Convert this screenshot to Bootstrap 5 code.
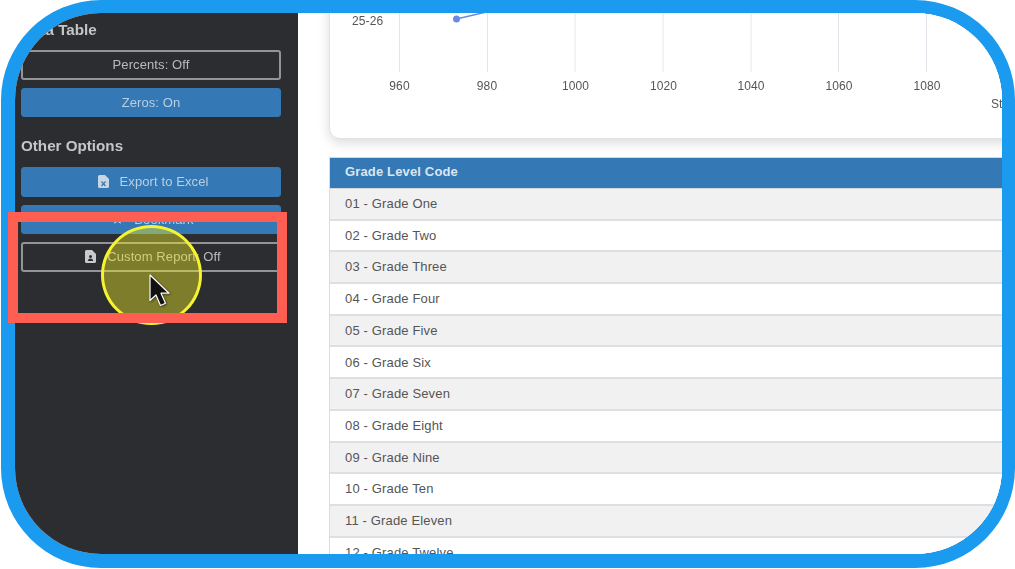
<!DOCTYPE html>
<html lang="en">
<head>
<meta charset="utf-8">
<title>Data table options</title>
<link href="https://cdn.jsdelivr.net/npm/bootstrap@5.3.0/dist/css/bootstrap.min.css" rel="stylesheet">
<style>
html,body{margin:0;height:569px;overflow:hidden;background:#fff;font-family:"Liberation Sans",Arial,sans-serif}
.page-canvas{position:relative;width:1015px;height:569px;overflow:hidden}
.frame-shell{box-sizing:border-box;width:1014px;height:568px;margin-left:1px;border:solid #1a9bf0;border-width:13px 13px 14px 14px;border-radius:100px;overflow:hidden;background:#fff}
.sidebar-pane{flex:0 0 283px;width:283px;height:541px;background:#2c2d30;padding:7px 17px 0 6px;color:#c9cbcd}
.soft-blur{filter:blur(.6px)}
.side-title{font-size:15.2px;font-weight:700;line-height:20px;margin:0 0 10px;color:#c4c6c8}
.side-title.later{margin:19px 0 11px}
.side-btn{display:flex;align-items:center;justify-content:center;gap:11px;height:29.5px;width:260px;padding:0;font-size:13px;line-height:1;border-radius:3px;color:#c8ccd2;letter-spacing:.1px}
.side-btn.with-icon{padding-left:4px}
.side-btn.is-on{background:#3478b5;border:1px solid #3478b5;color:#b9cfe4}
.side-btn.is-off{background:transparent;border:2px solid #929497;color:#b9bbbd}
.side-btn svg{flex:none}
.stack-a{display:flex;flex-direction:column;gap:8px}
.main-pane{flex:1 1 auto;min-width:0;height:541px;overflow:hidden;padding-left:31px;background:#fff}
.main-inner{width:800px;margin-top:-20px}
.chart-card{height:146px;border:1px solid #dfe2e6;border-radius:0 0 0 11px;box-shadow:0 4px 12px rgba(0,0,0,.14);background:#fff;margin-bottom:18px;overflow:hidden}
.chart-card svg{display:block;flex:none}
.chart-card text{font-family:"Liberation Sans",Arial,sans-serif;font-size:12px;letter-spacing:.1px;fill:#555}
.grade-table{width:800px;margin:0;border-collapse:separate;border-spacing:0;font-size:13px;letter-spacing:.15px;color:#555;border-left:1px solid #d8dce2}
.grade-table th{height:32px;padding:0 15px 2px;background:#3478b5;color:#dbe6f0;font-weight:700;border:0;border-top:1px solid #d3d7dc;border-bottom:1px solid #d3d7dc;box-shadow:none;vertical-align:middle}
.grade-table td{height:31.7px;padding:0 15px;border:0;border-bottom:2px solid #dce0e5;vertical-align:middle;box-shadow:none;color:#555;background:#fff}
.grade-table tbody tr:nth-child(odd) td{background:#f1f1f1}
.hl-box{position:absolute;left:8px;top:212px;width:279px;height:111px;border:10px solid #ff5f52;z-index:3}
.hl-dot{position:absolute;left:101px;top:225px;width:101px;height:100px;border-radius:50%;border:3.5px solid #f6f32f;background:rgba(240,236,40,.42);z-index:2}
.hl-cursor{position:absolute;left:148px;top:273px;z-index:4;filter:drop-shadow(1px 1px 1px rgba(0,0,0,.45))}
</style>
</head>
<body>
<div class="page-canvas">
<div class="frame-shell d-flex">
  <aside class="sidebar-pane">
    <div class="soft-blur">
    <h6 class="side-title">Data Table</h6>
    <div class="stack-a">
      <button type="button" class="btn side-btn is-off">Percents: Off</button>
      <button type="button" class="btn side-btn is-on">Zeros: On</button>
    </div>
    <h6 class="side-title later">Other Options</h6>
    <div class="stack-a">
      <button type="button" class="btn side-btn with-icon is-on">
        <svg width="11" height="13" viewBox="0 0 11 13"><path fill="#c8d6e4" d="M1.500 0H7l4 4v7.500A1.500 1.500 0 0 1 9.500 13h-8A1.500 1.500 0 0 1 0 11.500v-10A1.500 1.500 0 0 1 1.500 0z"/><path stroke="#3478b5" stroke-width="1.200" d="M3.500 6.500l4 4.500m0-4.500l-4 4.500"/></svg>
        <span>Export to Excel</span>
      </button>
      <button type="button" class="btn side-btn with-icon is-on">
        <svg width="11" height="12" viewBox="0 0 11 12"><path fill="#c8d6e4" d="M5.500 0l1.700 3.600 3.800.5-2.800 2.700.7 3.900-3.400-1.900-3.400 1.900.7-3.900L0 4.100l3.800-.5z"/></svg>
        <span>Bookmark</span>
      </button>
      <button type="button" class="btn side-btn with-icon is-off">
        <svg width="11" height="13" viewBox="0 0 11 13"><path fill="#c8cacc" d="M1.500 0H7l4 4v7.500A1.500 1.500 0 0 1 9.500 13h-8A1.500 1.500 0 0 1 0 11.500v-10A1.500 1.500 0 0 1 1.500 0z"/><circle cx="5.500" cy="6.500" r="1.500" fill="#2c2d30"/><path fill="#2c2d30" d="M2.800 11c0-1.800 1.200-2.600 2.700-2.600s2.700.8 2.700 2.600z"/></svg>
        <span>Custom Report: Off</span>
      </button>
    </div>
    </div>
  </aside>
  <main class="main-pane">
    <div class="main-inner soft-blur">
      <div class="card chart-card">
        <svg width="798" height="144" viewBox="0 0 798 144" role="img" aria-label="Chart">
          <g stroke="#e2e6ec" stroke-width="1">
            <path d="M69.500 0V78M157.500 0V78M245 0V78M333 0V78M421 0V78M508.500 0V78M596.500 0V78"/>
          </g>
          <path d="M126.500 25L200 7.700" stroke="#6a8ae8" stroke-width="1.500" fill="none"/>
          <circle cx="126.500" cy="25" r="3.500" fill="#6a8ae8"/>
          <text x="22" y="31">25-26</text>
          <g text-anchor="middle">
            <text x="69.500" y="96">960</text><text x="157" y="96">980</text><text x="245.500" y="96">1000</text><text x="333.500" y="96">1020</text><text x="421" y="96">1040</text><text x="509" y="96">1060</text><text x="597" y="96">1080</text>
          </g>
          <text x="661" y="114">Students</text>
        </svg>
      </div>
      <table class="table grade-table">
        <thead><tr><th>Grade Level Code</th></tr></thead>
        <tbody>
          <tr><td>01 - Grade One</td></tr>
          <tr><td>02 - Grade Two</td></tr>
          <tr><td>03 - Grade Three</td></tr>
          <tr><td>04 - Grade Four</td></tr>
          <tr><td>05 - Grade Five</td></tr>
          <tr><td>06 - Grade Six</td></tr>
          <tr><td>07 - Grade Seven</td></tr>
          <tr><td>08 - Grade Eight</td></tr>
          <tr><td>09 - Grade Nine</td></tr>
          <tr><td>10 - Grade Ten</td></tr>
          <tr><td>11 - Grade Eleven</td></tr>
          <tr><td>12 - Grade Twelve</td></tr>
        </tbody>
      </table>
    </div>
  </main>
</div>
<div class="hl-dot"></div>
<div class="hl-box"></div>
<svg class="hl-cursor" width="26" height="38" viewBox="0 0 26 38" aria-hidden="true"><path d="M2 2V27.500L8 22l4.500 10.500 5-2.200L13 20.200h8z" fill="#111" stroke="#fff" stroke-width="1.200" stroke-linejoin="round"/></svg>
</div>
</body>
</html>
